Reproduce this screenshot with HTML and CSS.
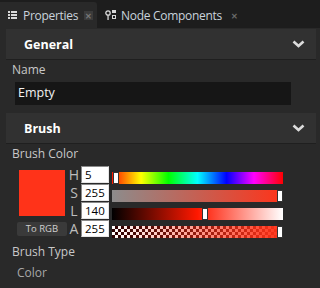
FILE: index.html
```html
<!DOCTYPE html>
<html lang="en">
<head>
    <meta charset="UTF-8">
    <title>Properties</title>
    <link rel="stylesheet" href="styles.css">
</head>
<body>
    <div class="tabs">
        <div class="tab active">
            <svg class="tab-icon" width="9" height="8" viewBox="0 0 9 8">
                <rect x="0" y="0" width="2" height="2" fill="#d8d8d8"/>
                <rect x="3" y="0" width="6" height="2" fill="#d8d8d8"/>
                <rect x="0" y="3" width="2" height="2" fill="#d8d8d8"/>
                <rect x="3" y="3" width="6" height="2" fill="#d8d8d8"/>
                <rect x="0" y="6" width="2" height="2" fill="#d8d8d8"/>
                <rect x="3" y="6" width="6" height="2" fill="#d8d8d8"/>
            </svg>
            <span class="tab-title">Properties</span>
            <span class="tab-close boxed">✕</span>
        </div>
        <div class="tab">
            <svg class="tab-icon" width="12" height="10" viewBox="0 0 12 10">
                <circle cx="3" cy="3" r="2.2" fill="none" stroke="#d8d8d8" stroke-width="1.3"/>
                <rect x="2.4" y="5" width="1.3" height="5" fill="#d8d8d8"/>
                <rect x="7" y="0" width="4" height="3" fill="#d8d8d8"/>
                <rect x="7.5" y="5.5" width="3" height="3" fill="none" stroke="#d8d8d8" stroke-width="1"/>
            </svg>
            <span class="tab-title">Node Components</span>
            <span class="tab-close">✕</span>
        </div>
    </div>

    <div class="panel">
        <div class="section-header">
            <span>General</span>
            <svg width="13" height="8" viewBox="0 0 13 8"><polyline points="1.5,1.5 6.5,6 11.5,1.5" fill="none" stroke="#dcdcdc" stroke-width="2.6"/></svg>
        </div>
        <div class="field-label">Name</div>
        <div class="text-box">Empty</div>

        <div class="section-header brush">
            <span>Brush</span>
            <svg width="13" height="8" viewBox="0 0 13 8"><polyline points="1.5,1.5 6.5,6 11.5,1.5" fill="none" stroke="#dcdcdc" stroke-width="2.6"/></svg>
        </div>
        <div class="field-label">Brush Color</div>

        <div class="color-edit">
            <div class="swatch-col">
                <div class="swatch"></div>
                <div class="rgb-button">To RGB</div>
            </div>
            <div class="channels">
                <span class="ch-label">H</span>
                <div class="num-box">5</div>
                <div class="bar hue"><span class="thumb" style="left:0.5%"></span></div>

                <span class="ch-label">S</span>
                <div class="num-box">255</div>
                <div class="bar sat"><span class="thumb" style="left:96.5%"></span></div>

                <span class="ch-label">L</span>
                <div class="num-box">140</div>
                <div class="bar light"><span class="thumb" style="left:52.5%"></span></div>

                <span class="ch-label">A</span>
                <div class="num-box">255</div>
                <div class="bar alpha"><span class="thumb" style="left:96.5%"></span></div>
            </div>
        </div>

        <div class="field-label type">Brush Type</div>
        <div class="type-value">Color</div>
    </div>
</body>
</html>
```

FILE: styles.css
```css
body {
    margin: 0;
    background: #292929;
    font-family: 'Open Sans', 'Noto Sans', sans-serif;
    font-size: 12px;
    color: #cfcfcf;
    overflow: hidden;
}
.tabs {
    display: flex;
    height: 28px;
    background: #1d1d1d;
    align-items: flex-end;
}
.tab {
    display: flex;
    align-items: center;
    height: 26px;
    padding: 0 0 0 8px;
    color: #c9d3dc;
}
.tab.active {
    width: 89px;
    background: #292929;
    border-top-right-radius: 3px;
}
.tab-icon {
    margin-right: 6px;
    flex-shrink: 0;
}
.tab + .tab .tab-icon {
    margin-right: 4px;
}
.tab-title {
    font-size: 12px;
    letter-spacing: -0.3px;
    white-space: nowrap;
}
.tab-close {
    display: flex;
    align-items: center;
    justify-content: center;
    width: 9px;
    height: 9px;
    margin-left: 8px;
    font-size: 8px;
    font-weight: bold;
    color: #6a6a6a;
}
.tab-close.boxed {
    margin-left: 6px;
    background: #3b3b3b;
    color: #777;
}
.panel {
    padding: 1px 4px 0 6px;
}
.section-header {
    display: flex;
    align-items: center;
    justify-content: space-between;
    height: 30px;
    padding: 0 11px 0 18px;
    background: #313131;
    border-bottom: 1px solid #1f1f1f;
    color: #fff;
    font-weight: bold;
    font-size: 12.5px;
}
.section-header.brush {
    margin-top: 8px;
}
.field-label {
    margin: 2px 0 0 6px;
    height: 16px;
    line-height: 16px;
    color: #c8c8c8;
}
.text-box {
    height: 23px;
    line-height: 22px;
    margin: 4px 25px 0 9px;
    padding-left: 3px;
    background: #161616;
    color: #f2f2f2;
    font-size: 12.5px;
}
.color-edit {
    display: flex;
    margin: 4px 0 0 11px;
}
.swatch-col {
    width: 50px;
    padding-top: 4px;
}
.swatch {
    width: 46px;
    height: 46px;
    margin-left: 2px;
    background: #ff3319;
}
.rgb-button {
    height: 14px;
    margin-top: 6px;
    line-height: 14px;
    text-align: center;
    background: #3a3a3a;
    border-radius: 2px;
    font-size: 9.5px;
    color: #cfcfcf;
}
.channels {
    display: grid;
    grid-template-columns: 14px 28px 174px;
    grid-auto-rows: 18px;
}
.ch-label {
    line-height: 18px;
    text-align: center;
    font-size: 14px;
    color: #bdbdbd;
}
.num-box {
    height: 15px;
    line-height: 16px;
    padding-left: 3px;
    background: #fff;
    border: 1px solid;
    border-color: #8a8a8a #e6e6e6 #e6e6e6 #8a8a8a;
    color: #000;
    font-size: 11.5px;
}
.bar {
    position: relative;
    height: 12px;
    margin: 6px 0 0 3px;
}
.hue {
    background: linear-gradient(to right, #ff1500, #ff0 17%, #0f0 33%, #0ff 50%, #00f 67%, #f0f 83%, #f00);
}
.sat {
    background: linear-gradient(to right, #8c8c8c, #ff3319);
}
.light {
    background: linear-gradient(to right, #000, #ff1800 50%, #fff);
}
.alpha {
    background:
        linear-gradient(to right, rgba(255, 51, 25, 0), #ff3319),
        repeating-conic-gradient(#2a0000 0 25%, #fff 0 50%) 0 0 / 6px 6px;
}
.thumb {
    position: absolute;
    top: 0;
    width: 4px;
    height: 10px;
    background: #fff;
    border: 1px solid #333;
}
.field-label.type {
    margin-top: 6px;
}
.type-value {
    margin: 5px 0 0 11px;
    height: 16px;
    line-height: 16px;
    color: #a8a8a8;
}
```
